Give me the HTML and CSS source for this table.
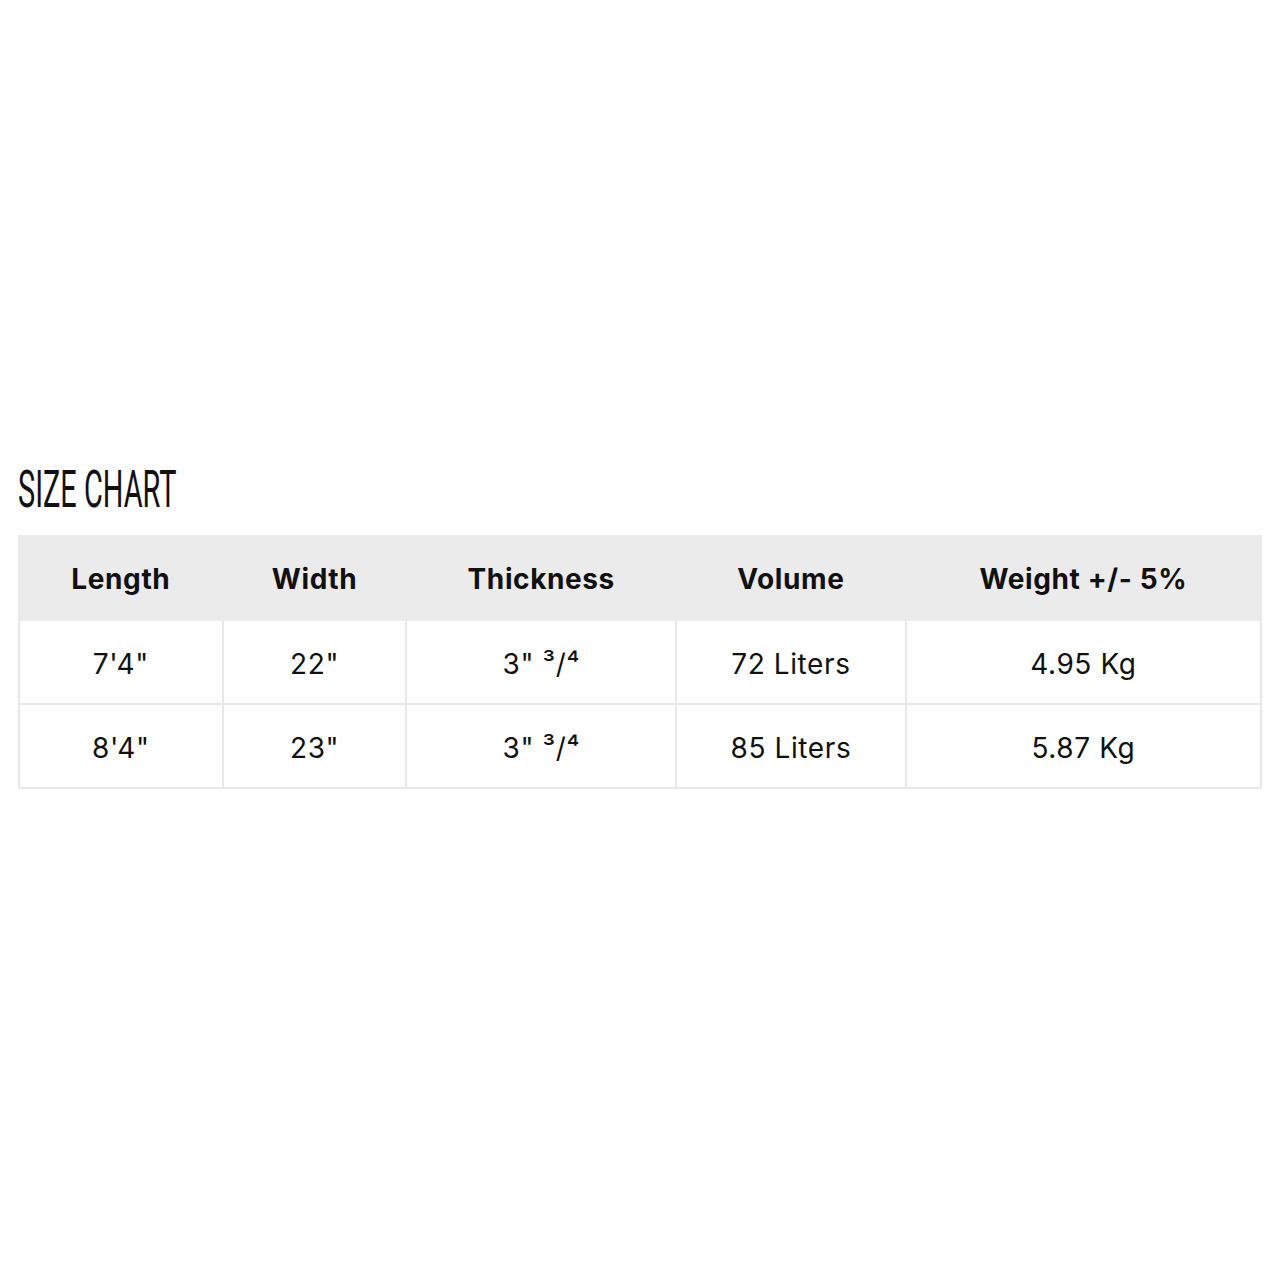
FILE: index.html
```html
<!DOCTYPE html>
<html>
<head>
<meta charset="utf-8">
<link rel="stylesheet" href="styles.css">
</head>
<body>
<div class="page">
  <h2 class="title"><span>SIZE CHART</span></h2>
  <table class="chart">
    <colgroup>
      <col class="c1"><col class="c2"><col class="c3"><col class="c4"><col class="c5">
    </colgroup>
    <thead>
      <tr><th>Length</th><th>Width</th><th>Thickness</th><th>Volume</th><th>Weight +/- 5%</th></tr>
    </thead>
    <tbody>
      <tr><td>7'4"</td><td>22"</td><td>3" ³/⁴</td><td>72 Liters</td><td>4.95 Kg</td></tr>
      <tr><td>8'4"</td><td>23"</td><td>3" ³/⁴</td><td>85 Liters</td><td>5.87 Kg</td></tr>
    </tbody>
  </table>
</div>
</body>
</html>
```
FILE: styles.css
```css
html, body { margin: 0; padding: 0; background: #fff; }
.page { padding: 465px 20px 0 18px; }
.title {
  margin: 0 0 20px 0;
  height: 50px;
  font-family: Roboto, sans-serif;
  font-weight: 400;
  font-size: 52px;
  line-height: 50px;
  color: #111;
}
.title span {
  display: inline-block;
  transform: scaleX(0.556);
  transform-origin: left center;
}
.chart {
  width: 1244px;
  border-collapse: collapse;
  font-family: Inter, "Liberation Sans", sans-serif;
  font-size: 28px;
  letter-spacing: 0.6px;
  color: #111;
}
.c1 { width: 204px; } .c2 { width: 184px; } .c3 { width: 270px; } .c4 { width: 230px; } .c5 { width: 356px; }
.chart th {
  background: #ebebeb;
  font-weight: 700;
  height: 80px;
  padding: 2px 0 0 0;
  border: 2px solid #ebebeb;
  text-align: center;
}
.chart td {
  height: 79px;
  padding: 3px 0 0 0;
  border: 2px solid #e8e8e8;
  text-align: center;
  font-weight: 400;
}
```
